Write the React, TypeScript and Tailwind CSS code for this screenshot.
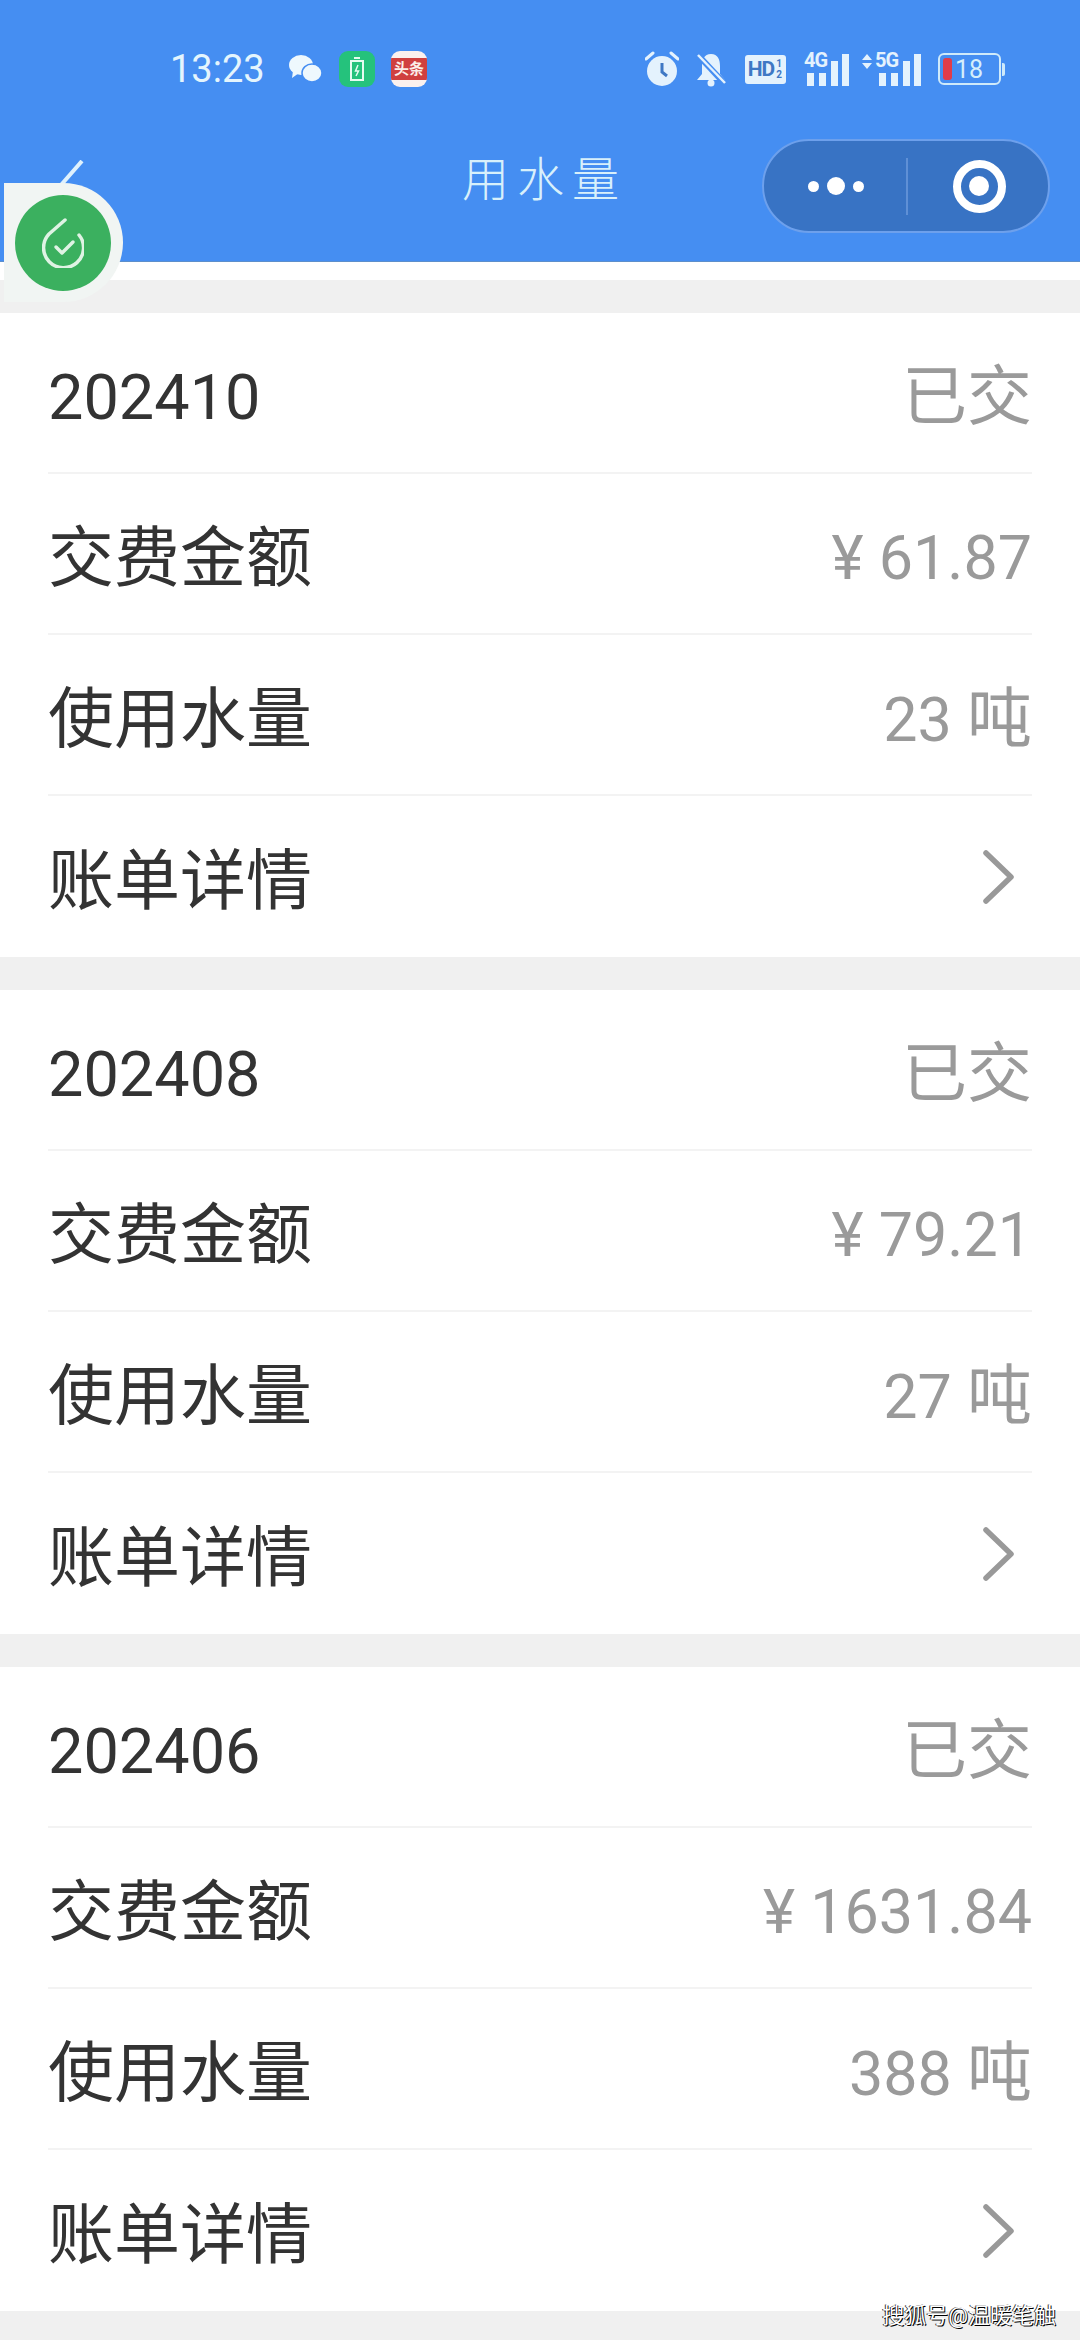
const bills = [
  { month: '202410', amount: '¥ 61.87', water: '23' },
  { month: '202408', amount: '¥ 79.21', water: '27' },
  { month: '202406', amount: '¥ 1631.84', water: '388' },
]

function Row({ children, right, last }: { children: React.ReactNode; right: React.ReactNode; last?: boolean }) {
  return (
    <div className={`h-[161px] flex items-center justify-between ${last ? '' : 'border-b-2 border-[#f3f3f3]'}`}>
      {children}
      {right}
    </div>
  )
}

const labelClass = 'pt-[10px] text-[66px] leading-none text-[#333333]'
const statusClass = 'pt-[10px] text-[65px] leading-none text-[#9a9a9a]'
const unitClass = 'text-[65px] leading-none text-[#9a9a9a]'
const valueClass = 'pt-[10px] text-[61px] leading-none text-[#9a9a9a]'

function StatusIcons() {
  return (
    <div className="flex items-center text-[#e4f2fd]">
      {/* alarm */}
      <svg width="34" height="36" viewBox="0 0 34 36" className="mr-[16px]">
        <circle cx="17" cy="20" r="15" fill="currentColor" />
        <path d="M1 8 L8 2 M33 8 L26 2" stroke="currentColor" strokeWidth="3" strokeLinecap="round" />
        <path d="M17 12 V21 L22 25" stroke="#3f78c4" strokeWidth="3" fill="none" />
      </svg>
      {/* muted bell */}
      <svg width="32" height="36" viewBox="0 0 32 36" className="mr-[18px]">
        <path d="M16 3 C23 3 25 9 25 15 V23 L30 29 H2 L7 23 V15 C7 9 9 3 16 3 Z" fill="currentColor" />
        <circle cx="16" cy="32" r="3.5" fill="currentColor" />
        <path d="M2 3 L30 33" stroke="#458ef2" strokeWidth="6" />
        <path d="M3 4 L30 32" stroke="currentColor" strokeWidth="2.5" />
      </svg>
      {/* HD */}
      <div className="w-[41px] h-[29px] mr-[18px] rounded-[3px] bg-[#e4f2fd] flex items-center justify-center text-[#3f78c4] text-[21px] leading-none font-bold">
        <span className="tracking-[-1px]">HD</span>
        <span className="text-[10px] leading-[11px] w-[8px] ml-[1px] text-center">1<br />2</span>
      </div>
      {/* 4G signal */}
      <div className="relative w-[46px] h-[34px] mr-[12px]">
        <span className="absolute left-0 -top-[2px] text-[20px] leading-[20px] font-bold tracking-[-1px]">4G</span>
        <svg width="46" height="34" viewBox="0 0 46 34" fill="currentColor">
          <rect x="3" y="21" width="7" height="13" />
          <rect x="15" y="21" width="7" height="13" />
          <rect x="27" y="9" width="7" height="25" />
          <rect x="38" y="2" width="7" height="32" />
        </svg>
      </div>
      {/* 5G signal */}
      <div className="relative w-[60px] h-[34px] mr-[16px]">
        <svg width="60" height="34" viewBox="0 0 60 34" fill="currentColor">
          <path d="M0 8 L5 2 L10 8 Z M0 11 L10 11 L5 17 Z" />
          <rect x="17" y="21" width="7" height="13" />
          <rect x="29" y="21" width="7" height="13" />
          <rect x="41" y="9" width="7" height="25" />
          <rect x="52" y="2" width="7" height="32" />
        </svg>
        <span className="absolute left-[13px] -top-[2px] text-[20px] leading-[20px] font-bold tracking-[-1px]">5G</span>
      </div>
      {/* battery */}
      <div className="flex items-center">
        <div className="w-[63px] h-[32px] rounded-[6px] border-2 border-[#cfeafa] flex items-center pl-[3px]">
          <div className="w-[9px] h-[22px] rounded-[3px] bg-[#e03c4a]" />
          <span className="ml-[3px] text-[25px] leading-none text-[#d5eefb]">18</span>
        </div>
        <div className="w-[3px] h-[13px] ml-[1px] rounded-r-[2px] bg-[#cfeafa]" />
      </div>
    </div>
  )
}

export default function App() {
  return (
    <div
      className="relative w-[1080px] h-[2340px] overflow-hidden bg-[#f0f0f0]"
      style={{ fontFamily: 'Roboto, "Noto Sans CJK SC", sans-serif' }}
    >
      <header className="h-[262px] bg-[#458ef2] border-b border-[#5d8fcb]">
        {/* status bar */}
        <div className="h-[139px] pt-[50px] pl-[170px] pr-[75px]">
          <div className="h-[38px] flex items-center justify-between">
            <div className="flex items-center">
              <span className="w-[119px] text-[38px] leading-none text-[#e4f5fd]">13:23</span>
              <svg width="33" height="30" viewBox="0 0 33 30" className="mr-[17px]" fill="#eef8fd">
                <ellipse cx="12" cy="11" rx="12" ry="10" />
                <path d="M4 17 L3 24 L10 19 Z" />
                <ellipse cx="23" cy="19" rx="10" ry="9" stroke="#458ef2" strokeWidth="1.5" />
              </svg>
              <div className="w-[36px] h-[36px] mr-[16px] rounded-[9px] bg-[#25c27c] flex items-center justify-center">
                <svg width="14" height="24" viewBox="0 0 14 24" fill="none" stroke="#e6fbf0" strokeWidth="2">
                  <rect x="1" y="4" width="12" height="19" />
                  <path d="M4 1 H10" />
                  <path d="M8 8 L5.5 14 H8.5 L6 19" strokeWidth="1.5" />
                </svg>
              </div>
              <div className="w-[36px] h-[36px] rounded-[9px] bg-[#fbf1ee] flex items-center overflow-hidden">
                <div className="w-full h-[22px] bg-[#d0403f] text-[#fbeee8] text-[15px] leading-[22px] text-center font-bold whitespace-nowrap">头条</div>
              </div>
            </div>
            <StatusIcons />
          </div>
        </div>

        {/* nav bar */}
        <div className="relative h-[94px] flex items-center justify-end pr-[30px]">
          <svg width="32" height="34" viewBox="0 0 32 34" className="absolute left-[52px] top-[21px]" fill="none" stroke="#dff1fd" strokeWidth="4">
            <path d="M30 1 L2 33" />
          </svg>
          <div className="absolute left-[462px] top-[17px] text-[47px] leading-none font-light tracking-[8px] text-[#d8f0fb]">用水量</div>
          <div className="w-[288px] h-[94px] rounded-full bg-[#3873c4] border-2 border-[#6da0ec] flex items-center">
            <div className="w-[142px] flex items-center justify-center gap-[8px] pl-[1px]">
              <span className="w-[11px] h-[11px] rounded-full bg-white" />
              <span className="w-[18px] h-[18px] rounded-full bg-white" />
              <span className="w-[11px] h-[11px] rounded-full bg-white" />
            </div>
            <div className="w-[2px] h-[57px] bg-[#5f90d6]" />
            <div className="flex-1 flex items-center justify-center pl-[2px]">
              <div className="w-[53px] h-[53px] rounded-full border-[8px] border-white flex items-center justify-center">
                <span className="w-[20px] h-[20px] rounded-full bg-white" />
              </div>
            </div>
          </div>
        </div>
      </header>

      {/* floating check badge */}
      <div className="absolute left-[4px] top-[183px] w-[119px] h-[119px] bg-[#f1f5f3] rounded-tr-full rounded-br-full rounded-bl-[40px] flex items-center justify-center">
        <div className="w-[96px] h-[96px] rounded-full bg-[#3bb05f] flex items-center justify-center -ml-[1px]">
          <svg width="42" height="50" viewBox="0 0 42 50" fill="none" stroke="#dff3e4" strokeWidth="3.5" strokeLinecap="round" strokeLinejoin="round">
            <path d="M23 2 L7 16 A20 20 0 1 0 37 17" />
            <path d="M14 29 L20 35 L31 24" />
          </svg>
        </div>
      </div>

      <main>
        <div className="h-[51px] border-t-[18px] border-white" />
        <div className="flex flex-col gap-[33px]">
          {bills.map((bill) => (
            <section key={bill.month} className="h-[644px] bg-white px-[48px]">
              <Row right={<span className={statusClass}>已交</span>}>
                <span className="pt-[10px] text-[63px] leading-none text-[#333333]">{bill.month}</span>
              </Row>
              <Row right={<span className={valueClass}>{bill.amount}</span>}>
                <span className={labelClass}>交费金额</span>
              </Row>
              <Row right={<span className={valueClass}>{bill.water} <span className={unitClass}>吨</span></span>}>
                <span className={labelClass}>使用水量</span>
              </Row>
              <Row
                last
                right={
                  <svg width="32" height="54" viewBox="0 0 32 54" className="mr-[17px]" fill="none" stroke="#999999" strokeWidth="5.5" strokeLinecap="round" strokeLinejoin="round">
                    <path d="M3 3 L28 27 L3 51" />
                  </svg>
                }
              >
                <span className={labelClass}>账单详情</span>
              </Row>
            </section>
          ))}
        </div>
      </main>

      {/* watermark */}
      <div className="absolute right-[24px] bottom-[13px] text-[22px] leading-none text-white whitespace-nowrap" style={{ textShadow: '1px 1px 0 #000, -1px 0 0 #333' }}>
        搜狐号@温暖笔触
      </div>
    </div>
  )
}
